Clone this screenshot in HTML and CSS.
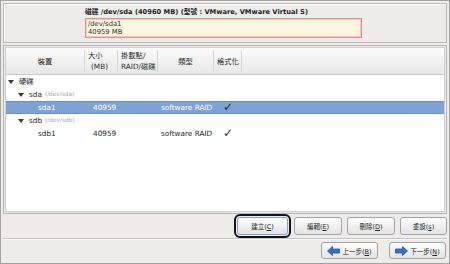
FILE: index.html
```html
<!DOCTYPE html>
<html lang="zh-Hant">
<head>
    <meta charset="UTF-8">
    <title>分割區</title>
    <link rel="stylesheet" href="styles.css">
</head>
<body>
    <div class="window">
        <div class="disk-panel">
            <div class="disk-title">磁碟 /dev/sda (40960 MB) (型號 : VMware, VMware Virtual S)</div>
            <div class="disk-map">
                <span>/dev/sda1</span>
                <span>40959 MB</span>
            </div>
        </div>

        <div class="tree-panel">
            <div class="tree">
                <div class="tree-head">
                    <div class="head-cell center">裝置</div>
                    <div class="head-cell">大小<br><span class="indent">(MB)</span></div>
                    <div class="head-cell">掛載點/<br>RAID/磁碟</div>
                    <div class="head-cell center">類型</div>
                    <div class="head-cell">格式化</div>
                    <div class="head-cell last"></div>
                </div>

                <div class="row">
                    <div class="cell lvl-0"><span class="expander"></span>硬碟</div>
                </div>
                <div class="row">
                    <div class="cell lvl-1"><span class="expander"></span>sda <span class="dev">(/dev/sda)</span></div>
                </div>
                <div class="row selected">
                    <div class="cell lvl-2">sda1</div>
                    <div class="cell size">40959</div>
                    <div class="cell"></div>
                    <div class="cell type">software RAID</div>
                    <div class="cell check">✓</div>
                </div>
                <div class="row">
                    <div class="cell lvl-1"><span class="expander"></span>sdb <span class="dev">(/dev/sdb)</span></div>
                </div>
                <div class="row">
                    <div class="cell lvl-2">sdb1</div>
                    <div class="cell size">40959</div>
                    <div class="cell"></div>
                    <div class="cell type">software RAID</div>
                    <div class="cell check">✓</div>
                </div>
            </div>
        </div>

        <div class="actions">
            <button class="btn btn-create focused"><span>建立(<u>C</u>)</span></button>
            <button class="btn btn-edit"><span>編輯(<u>E</u>)</span></button>
            <button class="btn btn-delete"><span>刪除(<u>D</u>)</span></button>
            <button class="btn btn-reset"><span>重設(<u>s</u>)</span></button>
        </div>

        <div class="separator"></div>

        <div class="nav">
            <button class="btn btn-nav">
                <svg width="13" height="10" viewBox="0 0 13 10">
                    <path d="M0.5 5 L5.5 0.5 L5.5 3 L12.5 3 L12.5 7 L5.5 7 L5.5 9.5 Z" fill="#3a6fc4" stroke="#23509a" stroke-width="0.8"/>
                </svg>
                <span>上一步(<u>B</u>)</span>
            </button>
            <button class="btn btn-nav">
                <svg width="13" height="10" viewBox="0 0 13 10">
                    <path d="M12.5 5 L7.5 0.5 L7.5 3 L0.5 3 L0.5 7 L7.5 7 L7.5 9.5 Z" fill="#3a6fc4" stroke="#23509a" stroke-width="0.8"/>
                </svg>
                <span>下一步(<u>N</u>)</span>
            </button>
        </div>
    </div>
</body>
</html>
```

FILE: styles.css
```css
body {
    margin: 0;
    font-family: "DejaVu Sans", "Noto Sans CJK TC", sans-serif;
    font-size: 7.3px;
    color: #1e1e1e;
    background: #edeceb;
}

.window {
    width: 450px;
    height: 264px;
    box-sizing: border-box;
    border: 1px solid #a4a4a4;
    padding: 2px;
    display: flex;
    flex-direction: column;
    background: #edeceb;
}

/* panneau du disque */
.disk-panel {
    height: 40px;
    flex: none;
    box-sizing: border-box;
    border: 1px solid #b9b9b9;
    box-shadow: inset 1px 1px 0 #fff;
    padding: 3px 0 0 81px;
}

.disk-title {
    font-weight: bold;
    font-size: 6.7px;
    line-height: 10px;
    height: 11px;
}

.disk-map {
    width: 277px;
    height: 20px;
    box-sizing: border-box;
    border: 1px solid #e48c8c;
    box-shadow: inset 0 0 0 1px #f6c9c2;
    background: #fdf5dd;
    padding: 2px 2px;
    display: flex;
    flex-direction: column;
    font-size: 6.8px;
    line-height: 7.5px;
    color: #333;
}

/* arbre des partitions */
.tree-panel {
    margin-top: 2px;
    height: 169px;
    flex: none;
    box-sizing: border-box;
    border: 1px solid #b4b4b4;
    padding: 1px;
}

.tree {
    height: 100%;
    box-sizing: border-box;
    border: 1px solid #cfcfcf;
    background: #fff;
}

.tree-head,
.row {
    display: grid;
    grid-template-columns: 79px 33px 40px 56px 28px 1fr;
}

.tree-head {
    height: 26px;
    background: linear-gradient(#fbfbfb, #e7e7e7);
    border-bottom: 1px solid #c8c8c8;
}

.head-cell {
    display: flex;
    flex-direction: column;
    justify-content: center;
    padding-left: 3px;
    line-height: 11px;
    border-right: 1px solid #d6d6d6;
    margin: 2px 0;
    color: #2a2a2a;
}

.head-cell.center {
    align-items: center;
    padding-left: 0;
}

.head-cell.last {
    border-right: none;
}

.indent {
    padding-left: 3px;
}

.row {
    height: 13px;
    line-height: 13px;
    white-space: nowrap;
}

.row.selected {
    background: #7fa2d5;
    color: #fff;
    box-shadow: inset 0 1px 0 #6c8fc6, inset 0 -1px 0 #6c8fc6;
}

.cell {
    display: flex;
    align-items: center;
}

.lvl-0 {
    padding-left: 2px;
}

.lvl-1 {
    padding-left: 12px;
}

.lvl-2 {
    padding-left: 32px;
}

.expander {
    width: 0;
    height: 0;
    border-left: 3px solid transparent;
    border-right: 3px solid transparent;
    border-top: 4px solid #3a3a3a;
    margin-right: 5px;
}

.dev {
    font-size: 5.8px;
    color: #a6a6a6;
    margin-left: 3px;
}

.size {
    padding-left: 8px;
}

.type {
    padding-left: 3px;
}

.check {
    padding-left: 9px;
    font-size: 12px;
    color: #2a2a2a;
}

.row.selected .check {
    color: #1c2c48;
}

/* boutons */
.actions {
    height: 24px;
    flex: none;
    display: flex;
    justify-content: flex-end;
    align-items: center;
    gap: 5px;
}

.btn {
    height: 18px;
    box-sizing: border-box;
    border: 1px solid #a3a3a3;
    border-radius: 3px;
    background: linear-gradient(#fdfdfd, #e4e4e4);
    font-family: inherit;
    font-size: 6.5px;
    color: #222;
    padding: 0;
    display: flex;
    align-items: center;
    justify-content: center;
    gap: 2px;
}

.btn u {
    text-underline-offset: 1px;
}

.btn-create {
    width: 51px;
    margin-right: 1px;
}

.btn-edit,
.btn-delete {
    width: 48px;
}

.btn-reset {
    width: 47px;
}

.focused {
    outline: 2px solid #141414;
    outline-offset: 1px;
    border-color: #8aa3c8;
}

.separator {
    height: 2px;
    flex: none;
    border-top: 1px solid #c4c4c4;
    background: #fafafa;
    box-sizing: border-box;
}

.nav {
    flex: 1;
    display: flex;
    justify-content: flex-end;
    align-items: center;
    gap: 11px;
    padding-right: 1px;
}

.btn-nav {
    width: 57px;
    height: 17px;
}
```
